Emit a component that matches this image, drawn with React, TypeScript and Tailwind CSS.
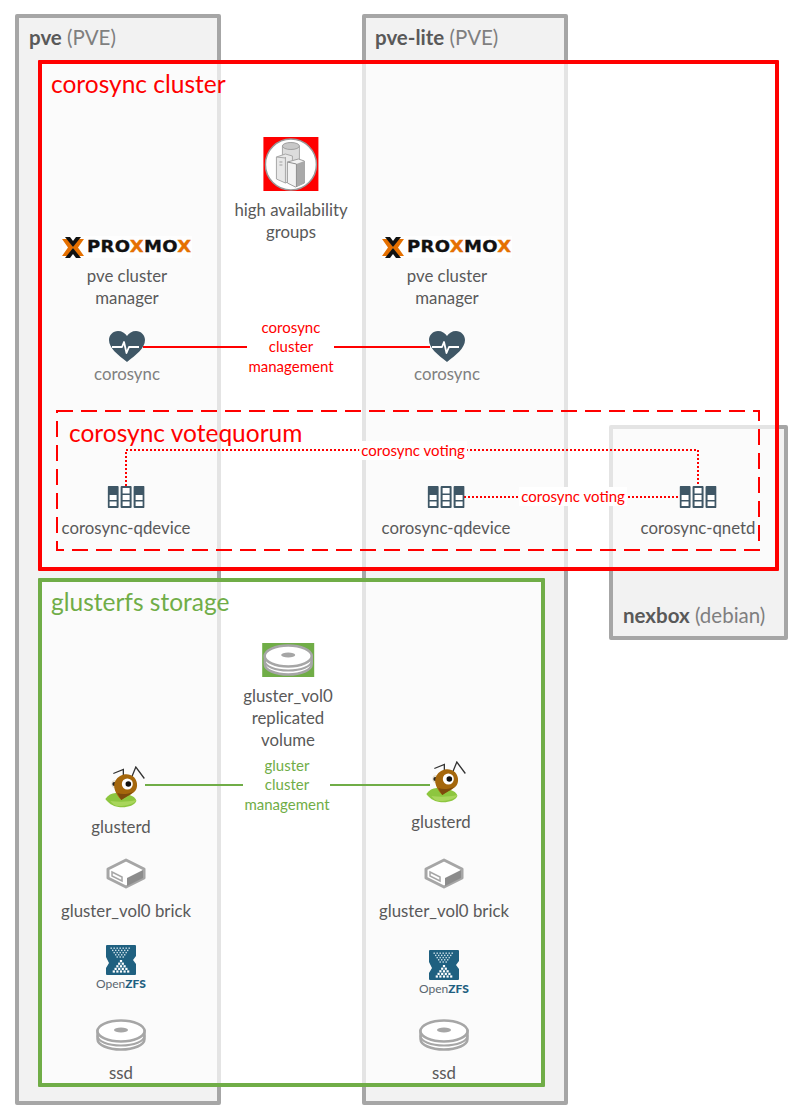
import type { ReactNode } from 'react';

const font = { fontFamily: 'Lato, "Open Sans", sans-serif' };

function ProxmoxLogo() {
  return (
    <div className="flex items-center w-[130px] h-[22px] bg-white/70">
      <svg width="22" height="21" viewBox="0 0 22 21" className="shrink-0">
        <path d="M0 2h6l5.500 8.500L6 19H0l6-8.500z" fill="#e57000" />
        <path d="M22 2h-6l-5.500 8.500L16 19h6l-6-8.500z" fill="#e57000" />
        <path d="M3 0h5l3 4 3-4h5l-8 10zM3 21h5l3-4 3 4h5l-8-10z" fill="#111" />
      </svg>
      <span
        className="ml-[3px] inline-block origin-left scale-x-[1.2] whitespace-nowrap text-[15px] leading-none font-bold tracking-[0.3px] text-[#111] [-webkit-text-stroke:0.3px]"
        style={{ fontFamily: '"DejaVu Sans", sans-serif' }}
      >
        PRO<span className="text-[#e57000]">X</span>MO<span className="text-[#e57000]">X</span>
      </span>
    </div>
  );
}

function HeartIcon() {
  return (
    <svg width="36" height="31" viewBox="0 0 36 31">
      <path d="M18 31C9 24 0 17 0 9 0 4 4 0 9 0c4 0 7 2 9 5 2-3 5-5 9-5 5 0 9 4 9 9 0 8-9 15-18 22z" fill="#3f5766" />
      <path d="M3 16h10l2-5 2.500 11 2.500-6h10" fill="none" stroke="#fff" strokeWidth="1.800" strokeLinejoin="round" />
    </svg>
  );
}

function QuorumIcon() {
  const col = (x: number, dark: boolean) => (
    <g key={x}>
      <rect x={x} y="0" width="11" height="22" rx="1" fill="#3f5766" />
      <rect x={x + 2} y="2" width="7" height="5.500" fill={dark ? '#3f5766' : '#fff'} />
      <rect x={x + 2} y="9" width="7" height="5" fill="#fff" />
      <rect x={x + 2} y="15.500" width="7" height="4.500" fill="#fff" />
    </g>
  );
  return (
    <svg width="37" height="22" viewBox="0 0 37 22">
      {col(0, true)}
      {col(13, false)}
      {col(26, true)}
    </svg>
  );
}

function DiscIcon() {
  return (
    <svg width="50" height="32" viewBox="0 0 50 32">
      <path d="M1.500 12v8c0 6 10.500 10.500 23.500 10.500S48.500 26 48.500 20v-8z" fill="#fff" stroke="#a6a6a6" strokeWidth="2.500" />
      <path d="M1.500 16.500c0 6 10.500 10 23.500 10s23.500-4 23.500-10" fill="none" stroke="#a6a6a6" strokeWidth="2" />
      <ellipse cx="25" cy="12" rx="23.500" ry="10.500" fill="#fff" stroke="#a6a6a6" strokeWidth="2.500" />
      <ellipse cx="25" cy="11" rx="7" ry="2.500" fill="#a6a6a6" />
    </svg>
  );
}

function BrickIcon() {
  return (
    <svg width="40" height="31" viewBox="0 0 40 31">
      <path d="M20 2 38 11v9L20 29 2 20v-9z" fill="#fff" stroke="#a6a6a6" strokeWidth="3" strokeLinejoin="round" />
      <path d="M37 12v8L21 28v-8z" fill="#8c8c8c" />
      <path d="M6 14l10 5v4L6 18z" fill="none" stroke="#a6a6a6" strokeWidth="1.500" />
    </svg>
  );
}

function AntIcon() {
  return (
    <svg width="44" height="44" viewBox="0 0 44 44">
      <path d="M1 33C5 27 12 25 18 29c6-2 14 2 14 6-2 5-10 7-18 6C8 40 4 37 1 33z" fill="#8dc63f" />
      <path d="M6 35c8 1 18 1 26-1-2 4-10 6-18 6-3 0-6-2-8-5z" fill="#a9d65c" />
      <path d="M9 7.500 19 3.500v7M27 12l4.500-11L40 12.500" fill="none" stroke="#333" strokeWidth="1.300" />
      <circle cx="11" cy="18" r="4" fill="#e8e0d0" />
      <circle cx="10" cy="18" r="2" fill="#222" />
      <path d="M17 34C11 28 8 20 11 15 14 9 21 7 26 9c6 2 8 9 6 14-2 5-10 7-15 11z" fill="#a5670c" />
      <path d="M17 34c-2-3-3-5-4-7 5 2 11 1 16-1-3 3-8 5-12 8z" fill="#7d4a0c" />
      <circle cx="23" cy="18" r="5.500" fill="#fff" />
      <circle cx="24" cy="18" r="2.800" fill="#111" />
    </svg>
  );
}

function ZfsLogo() {
  const top: ReactNode[] = [];
  const bottom: ReactNode[] = [];
  for (let row = 0; row < 5; row++) {
    for (let i = 0; i < 7 - row; i++) {
      top.push(<rect key={`t${row}-${i}`} x={15 - (7 - row) * 1.5 + i * 3} y={2.500 + row * 2.200} width="1.400" height="1.400" fill="#cfe2ea" />);
    }
    for (let i = 0; i < row + 1; i++) {
      bottom.push(<rect key={`b${row}-${i}`} x={15 - (row + 1) * 1.8 + i * 3.600 + 0.700} y={15 + row * 2.600} width="2.200" height="2.200" fill="#fff" />);
    }
  }
  return (
    <div className="flex flex-col items-center w-[60px]">
      <svg width="30" height="30" viewBox="0 0 30 30">
        <path d="M1 0h28a1 1 0 0 1 1 1v10l-3 4 3 4v10a1 1 0 0 1-1 1H1a1 1 0 0 1-1-1v-6l3-5-3-6V1a1 1 0 0 1 1-1z" fill="#1f6080" />
        {top}
        {bottom}
      </svg>
      <div className="mt-[2px] text-[12px] leading-[14px] text-[#5a6670]">
        Open<span className="font-black text-[#1f6080]">ZFS</span>
      </div>
    </div>
  );
}

function HaIcon() {
  return (
    <div className="flex items-center justify-center w-[55px] h-[54px] bg-[#ff0000]">
      <svg width="53" height="53" viewBox="0 0 53 53">
        <circle cx="26.500" cy="26.500" r="25.500" fill="#fff" stroke="#999" strokeWidth="1.500" />
        <path d="M18 8v16h17V8z" fill="#dcdcdc" stroke="#a8a8a8" />
        <ellipse cx="26.500" cy="8" rx="8.500" ry="3.500" fill="#c8c8c8" stroke="#a0a0a0" />
        <path d="M12 19l9-3 7 2v24l-7 3-9-4z" fill="#e8e8e8" stroke="#a8a8a8" />
        <path d="M21 19v26M12 19l9 1" stroke="#a8a8a8" fill="none" />
        <path d="M15 24h3M15 27h3" stroke="#a0a0a0" />
        <path d="M23 24l11-3 6 2v22l-9 4-8-4z" fill="#f2f2f2" stroke="#a0a0a0" />
        <path d="M32 26l8-3v22l-8 4z" fill="#a9a9a9" />
        <path d="M23 24l9 2v23" stroke="#8f8f8f" fill="none" />
      </svg>
    </div>
  );
}

function HostBox({ className, name, os }: { className: string; name: string; os: string }) {
  return (
    <div className={`absolute border-4 border-[#a6a6a6] bg-[#f2f2f2] rounded-[2px] whitespace-nowrap text-[20.500px] leading-[22px] text-[#7f7f7f] ${className}`}>
      <span className="font-bold text-[#595959]">{name}</span> {os}
    </div>
  );
}

// one diagram node: icon over its caption, placed by its centre
function Node({ className, children }: { className: string; children: ReactNode }) {
  return <div className={`absolute -translate-x-1/2 flex flex-col items-center ${className}`}>{children}</div>;
}

function Label({ className = '', children }: { className?: string; children: ReactNode }) {
  return <div className={`whitespace-nowrap text-center text-[16.800px] leading-[22px] text-[#595959] ${className}`}>{children}</div>;
}

function Note({ className, children }: { className: string; children: ReactNode }) {
  return <div className={`absolute -translate-x-1/2 whitespace-nowrap text-center text-[15px] leading-[19.300px] ${className}`}>{children}</div>;
}

function PveStack({ className }: { className: string }) {
  return (
    <Node className={className}>
      <ProxmoxLogo />
      <Label className="mt-[7px]">pve cluster<br />manager</Label>
      <div className="mt-[22px]"><HeartIcon /></div>
      <Label className="mt-[1px] text-[#808080]">corosync</Label>
    </Node>
  );
}

export default function App() {
  return (
    <div className="relative w-[805px] h-[1118px] overflow-hidden bg-white" style={font}>
      <HostBox className="left-[15px] top-[14px] w-[206px] h-[1091px] pl-[10px] pt-[8px]" name="pve" os="(PVE)" />
      <HostBox className="left-[362px] top-[14px] w-[206px] h-[1091px] pl-[9px] pt-[8px]" name="pve-lite" os="(PVE)" />
      <HostBox className="left-[609px] top-[425px] w-[179px] h-[215px] pl-[10px] pt-[175px]" name="nexbox" os="(debian)" />

      {/* clusters sit over the hosts, the white wash fades what is behind */}
      <div className="absolute left-[38px] top-[60px] w-[741px] h-[511px] border-4 border-[#ff0000] bg-white/70 rounded-[1px] pl-[9px] pt-[6px] text-[24.500px] leading-[28px] text-[#ff0000]">
        corosync cluster
      </div>
      <div className="absolute left-[38px] top-[578px] w-[507px] h-[509px] border-4 border-[#70ad47] bg-white/70 rounded-[1px] pl-[9px] pt-[6px] text-[24.500px] leading-[28px] text-[#70ad47]">
        glusterfs storage
      </div>

      <div className="absolute left-[56px] top-[410px] w-[704px] h-[141px] pl-[13px] pt-[9px] text-[24.500px] leading-[28px] text-[#ff0000]">
        <svg width="704" height="141" className="absolute inset-0">
          <rect x="1" y="1" width="702" height="139" fill="none" stroke="#ff0000" strokeWidth="2" strokeDasharray="16 8" />
        </svg>
        corosync votequorum
      </div>

      {/* connectors */}
      <svg width="805" height="1118" className="absolute inset-0">
        <path d="M143 347H247M334 347H430" stroke="#ff0000" strokeWidth="2" fill="none" />
        <path d="M145 785H243M330 785H430" stroke="#70ad47" strokeWidth="2" fill="none" />
        <path d="M126 486V450H698V486" stroke="#ff0000" strokeWidth="2" strokeDasharray="2 2" fill="none" />
        <path d="M464 497H680" stroke="#ff0000" strokeWidth="2" strokeDasharray="2 2" fill="none" />
      </svg>

      <Node className="left-[291px] top-[137px]">
        <HaIcon />
        <Label className="mt-[8px]">high availability<br />groups</Label>
      </Node>

      <PveStack className="left-[127px] top-[236px]" />
      <PveStack className="left-[447px] top-[236px]" />

      <Note className="left-[291px] top-[318px] text-[#ff0000]">corosync<br />cluster<br />management</Note>
      <Note className="left-[413px] top-[441px] bg-white text-[#ff0000] px-[2px]">corosync voting</Note>
      <Note className="left-[573px] top-[487px] bg-white text-[#ff0000] px-[2px]">corosync voting</Note>

      <Node className="left-[126px] top-[486px]">
        <QuorumIcon />
        <Label className="mt-[9px]">corosync-qdevice</Label>
      </Node>
      <Node className="left-[446px] top-[486px]">
        <QuorumIcon />
        <Label className="mt-[9px]">corosync-qdevice</Label>
      </Node>
      <Node className="left-[698px] top-[486px]">
        <QuorumIcon />
        <Label className="mt-[9px]">corosync-qnetd</Label>
      </Node>

      <Node className="left-[288px] top-[643px]">
        <div className="flex items-center justify-center w-[52px] h-[34px] bg-[#70ad47]">
          <DiscIcon />
        </div>
        <Label className="mt-[8px]">gluster_vol0<br />replicated<br />volume</Label>
      </Node>
      <Note className="left-[287px] top-[756px] text-[#70ad47]">gluster<br />cluster<br />management</Note>

      <Node className="left-[126px] top-[766px]">
        <AntIcon />
        <Label className="mt-[6px] -translate-x-[5px]">glusterd</Label>
      </Node>
      <Node className="left-[447px] top-[761px]">
        <AntIcon />
        <Label className="mt-[6px] -translate-x-[6px]">glusterd</Label>
      </Node>

      <Node className="left-[126px] top-[858px]">
        <BrickIcon />
        <Label className="mt-[11px]">gluster_vol0 brick</Label>
      </Node>
      <Node className="left-[444px] top-[858px]">
        <BrickIcon />
        <Label className="mt-[11px]">gluster_vol0 brick</Label>
      </Node>

      <Node className="left-[121px] top-[945px]"><ZfsLogo /></Node>
      <Node className="left-[444px] top-[950px]"><ZfsLogo /></Node>

      <Node className="left-[121px] top-[1019px]">
        <DiscIcon />
        <Label className="mt-[11px]">ssd</Label>
      </Node>
      <Node className="left-[444px] top-[1019px]">
        <DiscIcon />
        <Label className="mt-[11px]">ssd</Label>
      </Node>
    </div>
  );
}
